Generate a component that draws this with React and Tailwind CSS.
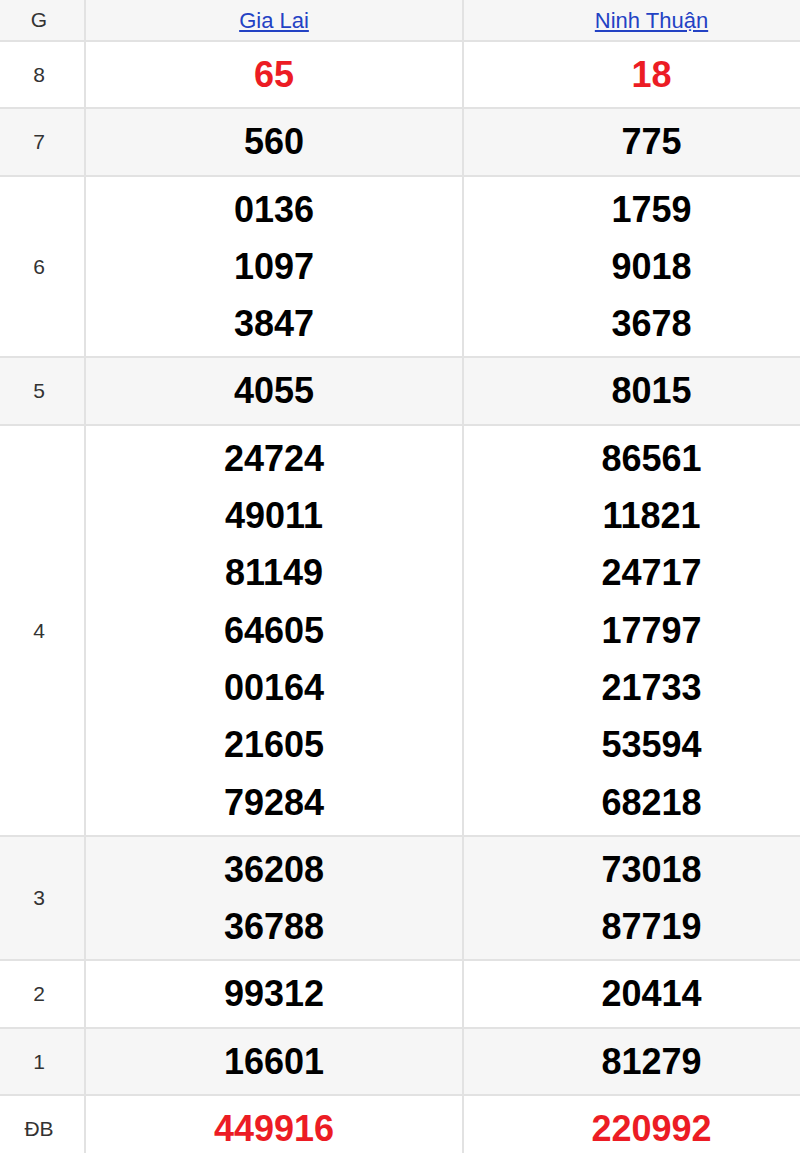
import React from "react";

const rows = [
  { g: "8", a: ["65"], b: ["18"], red: true },
  { g: "7", a: ["560"], b: ["775"] },
  { g: "6", a: ["0136", "1097", "3847"], b: ["1759", "9018", "3678"] },
  { g: "5", a: ["4055"], b: ["8015"] },
  {
    g: "4",
    a: ["24724", "49011", "81149", "64605", "00164", "21605", "79284"],
    b: ["86561", "11821", "24717", "17797", "21733", "53594", "68218"],
  },
  { g: "3", a: ["36208", "36788"], b: ["73018", "87719"] },
  { g: "2", a: ["99312"], b: ["20414"] },
  { g: "1", a: ["16601"], b: ["81279"] },
  { g: "ĐB", a: ["449916"], b: ["220992"], red: true },
];

function Nums({ list, red }) {
  return (
    <div
      className={`flex flex-col items-center justify-center py-1 border-r-2 border-[#e2e2e2] text-[36px] font-bold leading-[57.3px] ${
        red ? "text-[#ec1c24]" : "text-black"
      }`}
    >
      {list.map((n, i) => (
        <div key={i}>{n}</div>
      ))}
    </div>
  );
}

export default function App() {
  return (
    <div className="w-[800px] overflow-hidden bg-white" style={{ fontFamily: '"Liberation Sans", Arial, sans-serif' }}>
      <div className="w-[841px]">
        <div className="grid grid-cols-[86px_378px_377px] h-[42px] bg-[#f6f6f6] border-b-2 border-[#e2e2e2] text-[21px]">
          <div className="flex items-center justify-center pr-[6px] border-r-2 border-[#e2e2e2] text-[#333]">G</div>
          <div className="flex items-center justify-center border-r-2 border-[#e2e2e2]">
            <a href="#" className="underline text-[#2342c4] text-[22px]">Gia Lai</a>
          </div>
          <div className="flex items-center justify-center border-r-2 border-[#e2e2e2]">
            <a href="#" className="underline text-[#2342c4] text-[22px]">Ninh Thuận</a>
          </div>
        </div>
        {rows.map((r, i) => (
          <div
            key={r.g}
            className={`grid grid-cols-[86px_378px_377px] border-b-2 border-[#e2e2e2] ${
              i % 2 === 1 ? "bg-[#f6f6f6]" : "bg-white"
            }`}
          >
            <div className="flex items-center justify-center pr-[6px] border-r-2 border-[#e2e2e2] text-[21px] text-[#333]">
              {r.g}
            </div>
            <Nums list={r.a} red={r.red} />
            <Nums list={r.b} red={r.red} />
          </div>
        ))}
      </div>
    </div>
  );
}
